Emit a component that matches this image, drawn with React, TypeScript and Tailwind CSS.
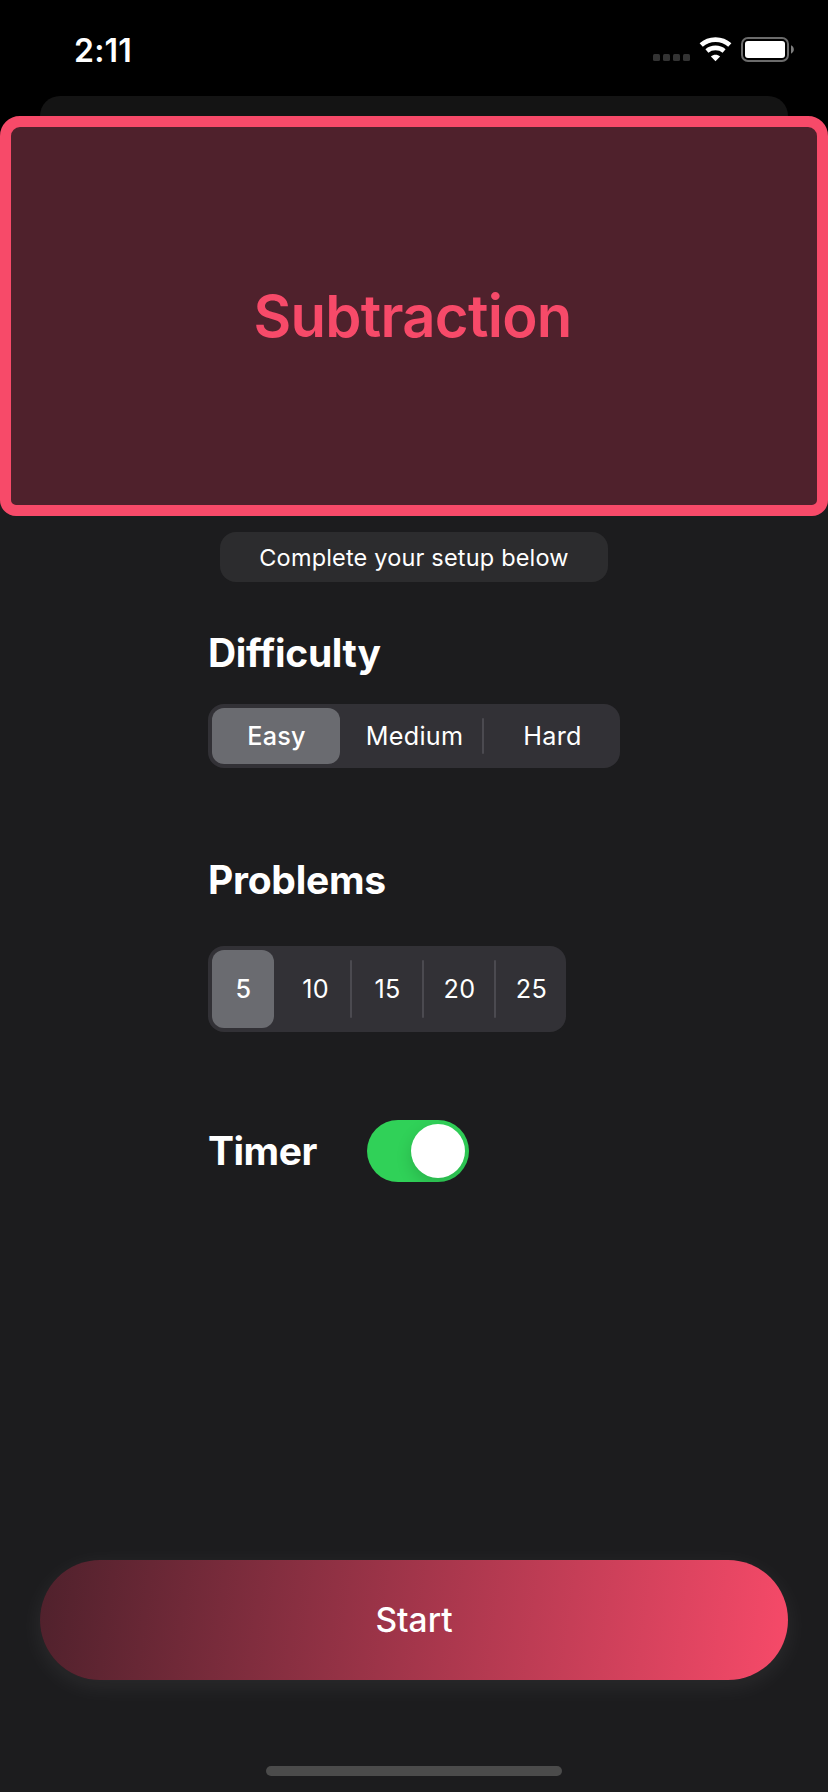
import React, { useState } from 'react';

function StatusBar() {
  return (
    <div className="flex h-24 items-start justify-between bg-black pl-[74px] pr-[33px]">
      <span className="mt-[31px] text-[32px] font-semibold leading-[40px] tracking-[0.2px]">2:11</span>
      <div className="mt-[37px] flex h-[26px] items-start">
        <div className="mt-[17px] flex gap-[3px]">
          <span className="size-[7px] rounded-[1.5px] bg-[#333333]" />
          <span className="size-[7px] rounded-[1.5px] bg-[#333333]" />
          <span className="size-[7px] rounded-[1.5px] bg-[#333333]" />
          <span className="size-[7px] rounded-[1.5px] bg-[#333333]" />
        </div>
        <svg className="ml-[9px]" width="33" height="25" viewBox="0 0 33 25" fill="none">
          <path d="M2.2 8C10 0.8 23 0.8 30.8 8" stroke="#fff" strokeWidth="4.7" />
          <path d="M7.9 13.9C12.6 9.9 20.4 9.9 25.1 13.9" stroke="#fff" strokeWidth="4.6" />
          <path d="M16.5 24.2L11.9 19.5C14.5 17 18.5 17 21.1 19.5Z" fill="#fff" />
        </svg>
        <svg className="ml-[9px]" width="54" height="25" viewBox="0 0 54 25" fill="none">
          <rect x="1" y="1" width="46" height="23" rx="6" stroke="#6b6b6b" strokeWidth="2" />
          <rect x="4" y="4" width="40" height="17" rx="3" fill="#fff" />
          <path d="M50 8.3C53.8 10 53.8 15 50 16.7Z" fill="#7d7d7d" />
        </svg>
      </div>
    </div>
  );
}

function Segment({ label, width, selected, onSelect, spacing }: {
  label: string; width: string; selected: boolean; onSelect: () => void; spacing: string;
}) {
  return (
    <button
      onClick={onSelect}
      className={`flex h-full items-center justify-center rounded-[12px] pl-px text-[25.2px] leading-8 ${spacing} ${width} ${
        selected ? 'bg-[#6a6b70] font-medium' : 'font-normal'
      }`}
    >
      {label}
    </button>
  );
}

function Divider({ visible }: { visible: boolean }) {
  return (
    <span className="flex h-full w-[10px] justify-center py-[10px]">
      <span className={`h-full w-[2px] rounded-full ${visible ? 'bg-[#4b4a50]' : ''}`} />
    </span>
  );
}

const levels = ['Easy', 'Medium', 'Hard'];
const counts = ['5', '10', '15', '20', '25'];

export default function App() {
  const [level, setLevel] = useState(0);
  const [count, setCount] = useState(0);
  const [timer, setTimer] = useState(true);

  return (
    <div className="flex h-[1792px] w-[828px] flex-col bg-[#1c1c1e] font-[Inter,'Liberation_Sans',sans-serif] text-white">
      <StatusBar />
      <div className="h-5 shrink-0 bg-black px-10">
        <div className="h-full rounded-t-[20px] bg-[#141414]" />
      </div>
      <div className="shrink-0 bg-[linear-gradient(#000_50%,#1c1c1e_50%)]">
        <div className="flex h-[400px] items-center justify-center rounded-t-[20px] rounded-b-[16px] border-[11px] border-[#f74a69] bg-[#4f212c]">
          <h1 className="-ml-[3px] text-[58px] font-semibold leading-[70px] tracking-[-0.7px] text-[#f74a69]">Subtraction</h1>
        </div>
      </div>

      <div className="mt-4 flex h-[50px] w-[388px] shrink-0 items-center justify-center self-center rounded-[16px] bg-[#2c2c2e] pt-[2px] text-[23.5px] leading-8 tracking-[0.18px]">
        Complete your setup below
      </div>

      <div className="flex flex-col items-start pl-[208px]">
        <h2 className="mt-[47px] text-[39px] font-bold leading-[48px] tracking-[-0.35px]">Difficulty</h2>
        <div className="mt-[27px] flex h-16 w-[412px] rounded-[16px] bg-[#323136] p-1">
          {levels.map((label, i) => (
            <React.Fragment key={label}>
              {i > 0 && <Divider visible={level !== i && level !== i - 1} />}
              <Segment label={label} width="w-[128px]" spacing="tracking-[0.25px]" selected={level === i} onSelect={() => setLevel(i)} />
            </React.Fragment>
          ))}
        </div>

        <h2 className="mt-[88px] text-[39px] font-bold leading-[48px] tracking-[-0.25px]">Problems</h2>
        <div className="mt-[42px] flex h-[86px] w-[358px] rounded-[16px] bg-[#323136] p-1">
          {counts.map((label, i) => (
            <React.Fragment key={label}>
              {i > 0 && <Divider visible={count !== i && count !== i - 1} />}
              <Segment label={label} width="w-[62px]" spacing="tracking-[0.3px]" selected={count === i} onSelect={() => setCount(i)} />
            </React.Fragment>
          ))}
        </div>

        <div className="mt-[88px] flex h-[62px] items-center">
          <h2 className="w-[159px] text-[39px] font-bold leading-[48px] tracking-[-0.5px]">Timer</h2>
          <button
            onClick={() => setTimer(!timer)}
            className={`flex h-[62px] w-[102px] overflow-hidden rounded-full p-1 ${timer ? 'justify-end bg-[#30d158]' : 'justify-start bg-[#39393d]'}`}
          >
            <span className="size-[54px] rounded-full bg-white shadow-[0_6px_16px_rgba(0,0,0,0.15)]" />
          </button>
        </div>
      </div>

      <button className="mx-10 mt-[378px] h-[120px] shrink-0 rounded-full bg-[linear-gradient(98deg,#4f212c,#f74a69)] text-[33.5px] font-medium leading-10 shadow-[0_6px_24px_rgba(255,255,255,0.07)]">
        Start
      </button>
      <div className="mt-[86px] h-[10px] w-[296px] shrink-0 self-center rounded-full bg-[#4b4b4b]" />
    </div>
  );
}
